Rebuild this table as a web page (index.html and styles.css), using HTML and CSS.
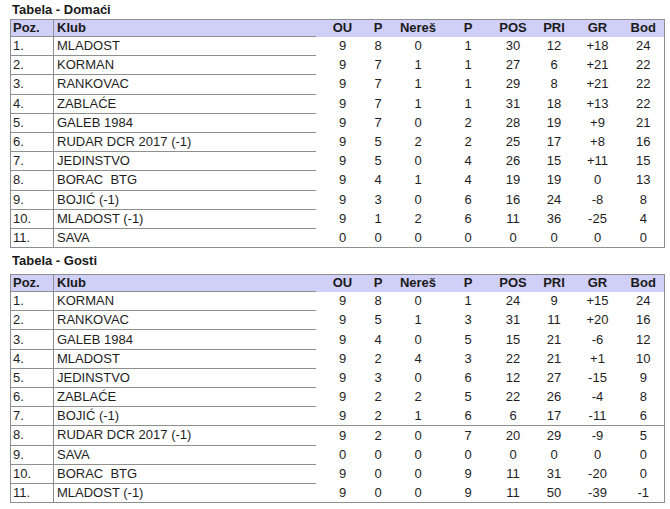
FILE: index.html
```html
<!DOCTYPE html>
<html>
<head>
<meta charset="utf-8">
<link rel="stylesheet" href="styles.css">
</head>
<body>
<div class="page">
  <h2 class="title first">Tabela - Domaći</h2>
  <table class="standings">
    <colgroup>
      <col class="c-poz"><col class="c-klub"><col class="c-ou"><col class="c-p"><col class="c-ner"><col class="c-p2"><col class="c-pos"><col class="c-pri"><col class="c-gr"><col class="c-bod">
    </colgroup>
    <thead>
      <tr><th class="poz">Poz.</th><th class="klub">Klub</th><th class="ou">OU</th><th>P</th><th>Nereš</th><th>P</th><th>POS</th><th>PRI</th><th>GR</th><th>Bod</th></tr>
    </thead>
    <tbody>
      <tr><td class="poz">1.</td><td class="klub">MLADOST</td><td class="ou">9</td><td>8</td><td>0</td><td>1</td><td>30</td><td>12</td><td>+18</td><td>24</td></tr>
      <tr><td class="poz">2.</td><td class="klub">KORMAN</td><td class="ou">9</td><td>7</td><td>1</td><td>1</td><td>27</td><td>6</td><td>+21</td><td>22</td></tr>
      <tr><td class="poz">3.</td><td class="klub">RANKOVAC</td><td class="ou">9</td><td>7</td><td>1</td><td>1</td><td>29</td><td>8</td><td>+21</td><td>22</td></tr>
      <tr><td class="poz">4.</td><td class="klub">ZABLAĆE</td><td class="ou">9</td><td>7</td><td>1</td><td>1</td><td>31</td><td>18</td><td>+13</td><td>22</td></tr>
      <tr><td class="poz">5.</td><td class="klub">GALEB 1984</td><td class="ou">9</td><td>7</td><td>0</td><td>2</td><td>28</td><td>19</td><td>+9</td><td>21</td></tr>
      <tr><td class="poz">6.</td><td class="klub">RUDAR DCR 2017 (-1)</td><td class="ou">9</td><td>5</td><td>2</td><td>2</td><td>25</td><td>17</td><td>+8</td><td>16</td></tr>
      <tr><td class="poz">7.</td><td class="klub">JEDINSTVO</td><td class="ou">9</td><td>5</td><td>0</td><td>4</td><td>26</td><td>15</td><td>+11</td><td>15</td></tr>
      <tr><td class="poz">8.</td><td class="klub">BORAC &nbsp;BTG</td><td class="ou">9</td><td>4</td><td>1</td><td>4</td><td>19</td><td>19</td><td>0</td><td>13</td></tr>
      <tr><td class="poz">9.</td><td class="klub">BOJIĆ (-1)</td><td class="ou">9</td><td>3</td><td>0</td><td>6</td><td>16</td><td>24</td><td>-8</td><td>8</td></tr>
      <tr><td class="poz">10.</td><td class="klub">MLADOST (-1)</td><td class="ou">9</td><td>1</td><td>2</td><td>6</td><td>11</td><td>36</td><td>-25</td><td>4</td></tr>
      <tr><td class="poz">11.</td><td class="klub">SAVA</td><td class="ou">0</td><td>0</td><td>0</td><td>0</td><td>0</td><td>0</td><td>0</td><td>0</td></tr>
    </tbody>
  </table>

  <h2 class="title second">Tabela - Gosti</h2>
  <table class="standings">
    <colgroup>
      <col class="c-poz"><col class="c-klub"><col class="c-ou"><col class="c-p"><col class="c-ner"><col class="c-p2"><col class="c-pos"><col class="c-pri"><col class="c-gr"><col class="c-bod">
    </colgroup>
    <thead>
      <tr><th class="poz">Poz.</th><th class="klub">Klub</th><th class="ou">OU</th><th>P</th><th>Nereš</th><th>P</th><th>POS</th><th>PRI</th><th>GR</th><th>Bod</th></tr>
    </thead>
    <tbody>
      <tr><td class="poz">1.</td><td class="klub">KORMAN</td><td class="ou">9</td><td>8</td><td>0</td><td>1</td><td>24</td><td>9</td><td>+15</td><td>24</td></tr>
      <tr><td class="poz">2.</td><td class="klub">RANKOVAC</td><td class="ou">9</td><td>5</td><td>1</td><td>3</td><td>31</td><td>11</td><td>+20</td><td>16</td></tr>
      <tr><td class="poz">3.</td><td class="klub">GALEB 1984</td><td class="ou">9</td><td>4</td><td>0</td><td>5</td><td>15</td><td>21</td><td>-6</td><td>12</td></tr>
      <tr><td class="poz">4.</td><td class="klub">MLADOST</td><td class="ou">9</td><td>2</td><td>4</td><td>3</td><td>22</td><td>21</td><td>+1</td><td>10</td></tr>
      <tr><td class="poz">5.</td><td class="klub">JEDINSTVO</td><td class="ou">9</td><td>3</td><td>0</td><td>6</td><td>12</td><td>27</td><td>-15</td><td>9</td></tr>
      <tr><td class="poz">6.</td><td class="klub">ZABLAĆE</td><td class="ou">9</td><td>2</td><td>2</td><td>5</td><td>22</td><td>26</td><td>-4</td><td>8</td></tr>
      <tr><td class="poz">7.</td><td class="klub">BOJIĆ (-1)</td><td class="ou">9</td><td>2</td><td>1</td><td>6</td><td>6</td><td>17</td><td>-11</td><td>6</td></tr>
      <tr class="split"><td class="poz">8.</td><td class="klub">RUDAR DCR 2017 (-1)</td><td class="ou">9</td><td>2</td><td>0</td><td>7</td><td>20</td><td>29</td><td>-9</td><td>5</td></tr>
      <tr><td class="poz">9.</td><td class="klub">SAVA</td><td class="ou">0</td><td>0</td><td>0</td><td>0</td><td>0</td><td>0</td><td>0</td><td>0</td></tr>
      <tr><td class="poz">10.</td><td class="klub">BORAC &nbsp;BTG</td><td class="ou">9</td><td>0</td><td>0</td><td>9</td><td>11</td><td>31</td><td>-20</td><td>0</td></tr>
      <tr><td class="poz">11.</td><td class="klub">MLADOST (-1)</td><td class="ou">9</td><td>0</td><td>0</td><td>9</td><td>11</td><td>50</td><td>-39</td><td>-1</td></tr>
    </tbody>
  </table>
</div>
</body>
</html>
```

FILE: styles.css
```css
html, body {
  margin: 0;
  padding: 0;
  background: #ffffff;
}

body {
  font-family: "Liberation Sans", Arial, sans-serif;
  font-size: 13px;
  color: #1e1e1e;
}

.page {
  padding: 2px 6px 0 10px;
}

.title {
  margin: 0;
  font-size: 13px;
  font-weight: bold;
  line-height: 15px;
  padding-left: 2px;
  color: #1a1a1a;
}

.title.first {
  margin-bottom: 2px;
}

.title.second {
  margin-top: 5px;
  margin-bottom: 6px;
}

.standings {
  width: 654px;
  table-layout: fixed;
  border-collapse: collapse;
  border: 1px solid #8f8f8f;
}

.c-poz { width: 43px; }
.c-klub { width: 262px; }
.c-ou { width: 50px; }
.c-p { width: 25px; }
.c-ner { width: 55px; }
.c-p2 { width: 45px; }
.c-pos { width: 45px; }
.c-pri { width: 37px; }
.c-gr { width: 50px; }
.c-bod { width: 42px; }

.standings th,
.standings td {
  padding: 0;
  text-align: center;
  white-space: nowrap;
  overflow: hidden;
}

.standings th {
  height: 16px;
  background: #cfcff7;
  font-weight: bold;
  line-height: 16px;
  color: #1a1a1a;
}

.standings td {
  height: 18.2px;
  line-height: 18px;
}

.standings .poz {
  text-align: left;
  padding-left: 2px;
  border-right: 1px solid #8f8f8f;
  border-bottom: 1px solid #8f8f8f;
}

.standings .klub {
  text-align: left;
  padding-left: 3px;
  border-bottom: 1px solid #8f8f8f;
}

.standings .ou {
  padding-left: 4px;
}

.standings .split td {
  border-top: 1px solid #8f8f8f;
}
```
